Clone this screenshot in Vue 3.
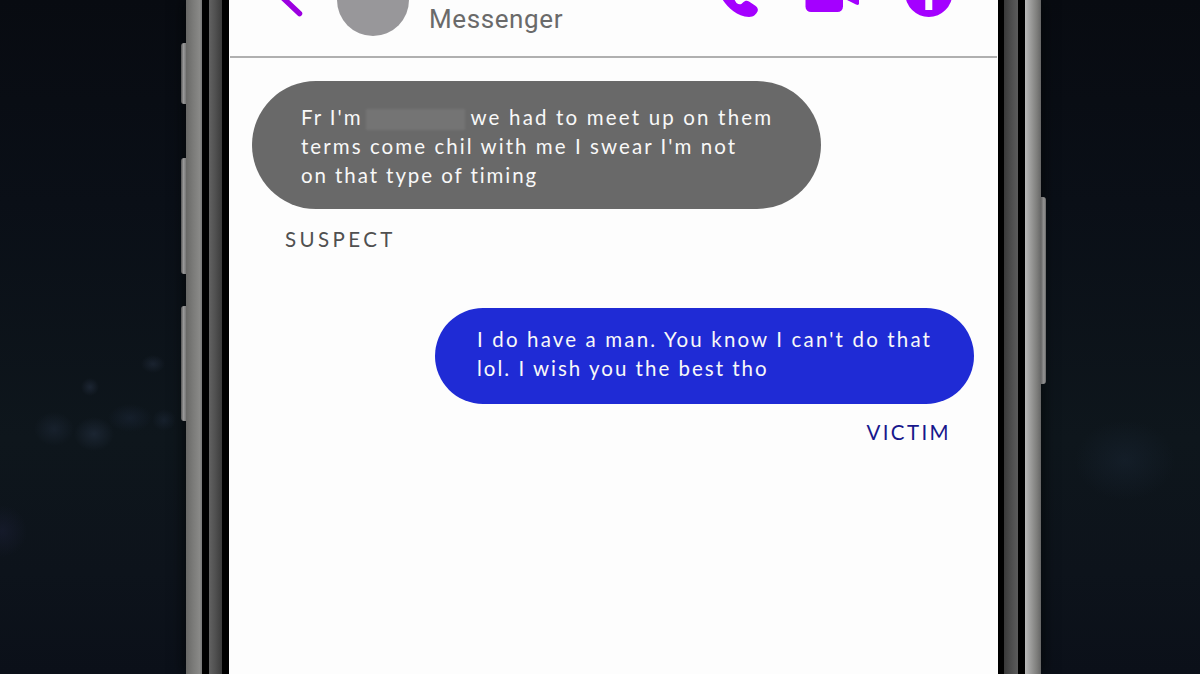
<template>
  <div class="scene">
    <div class="phone">
      <span class="key key-silent"></span>
      <span class="key key-up"></span>
      <span class="key key-down"></span>
      <span class="key key-power"></span>

      <div class="rail rail-left"></div>
      <div class="gap"></div>
      <div class="bezel bezel-left"></div>
      <div class="gap"></div>

      <div class="screen">
        <header class="header">
          <svg class="back" width="30" height="56" viewBox="0 0 30 56">
            <path d="M19 -20 L4 -3 L21.500 13.500" />
          </svg>
          <div class="avatar"></div>
          <span class="app-name">Messenger</span>
          <svg class="actions" width="240" height="56" viewBox="0 0 240 56">
            <path
              d="M-2 -12 C1 -2 12 16 30 17 C35 17 37 14 38.500 11.5 C39.5 9 38.500 7.5 36 5.5 L30 1.5 C28 0 26 .5 24 2.5 C22 4.8 20 5 17.500 3 L8 -12 Z"
            />
            <rect x="86.500" y="-15" width="37.500" height="27" rx="5.500" />
            <path d="M127 -3 L140 -11 V3.300 Q140 6 137 4.600 L127 -.5 Z" />
            <circle cx="209.800" cy="-6.500" r="23.500" />
            <rect class="info-stem" x="206.300" y="-8" width="7" height="18" />
          </svg>
        </header>

        <main class="chat">
          <section
            v-for="message in messages"
            :key="message.author"
            class="message"
            :class="message.side"
          >
            <div class="bubble">
              <p v-for="(line, i) in message.lines" :key="i" class="line">
                <span
                  v-for="(part, j) in line"
                  :key="j"
                  :class="part.hidden ? 'hidden-name' : ''"
                  :style="part.hidden ? null : { letterSpacing: part.spacing + 'px' }"
                  >{{ part.text }}</span
                >
              </p>
            </div>
            <span class="author">{{ message.author }}</span>
          </section>
        </main>
      </div>

      <div class="gap gap-thin"></div>
      <div class="bezel bezel-right"></div>
      <div class="gap"></div>
      <div class="rail rail-right"></div>
    </div>
  </div>
</template>

<script setup>
import { ref } from "vue";

const messages = ref([
  {
    author: "SUSPECT",
    side: "incoming",
    lines: [
      [
        { text: "Fr I'm", spacing: 1.95 },
        { hidden: true },
        { text: "we had to meet up on them", spacing: 2.17 },
      ],
      [{ text: "terms come chil with me I swear I'm not", spacing: 2.06 }],
      [{ text: "on that type of timing", spacing: 1.92 }],
    ],
  },
  {
    author: "VICTIM",
    side: "outgoing",
    lines: [
      [{ text: "I do have a man. You know I can't do that", spacing: 2.15 }],
      [{ text: "lol. I wish you the best tho", spacing: 2 }],
    ],
  },
]);
</script>

<style>
body {
  margin: 0;
  overflow: hidden;
}
</style>

<style scoped>
.scene {
  display: flex;
  height: 674px;
  padding-left: 186px;
  box-sizing: border-box;
  overflow: hidden;
  font-family: Lato, "Liberation Sans", sans-serif;
  background:
    radial-gradient(ellipse 9px 9px at 90px 387px, rgba(50, 62, 85, 0.4), transparent),
    radial-gradient(ellipse 12px 9px at 153px 364px, rgba(50, 62, 85, 0.35), transparent),
    radial-gradient(ellipse 20px 17px at 54px 429px, rgba(45, 58, 82, 0.3), transparent),
    radial-gradient(ellipse 20px 17px at 94px 434px, rgba(48, 62, 85, 0.38), transparent),
    radial-gradient(ellipse 22px 14px at 130px 418px, rgba(38, 52, 78, 0.3), transparent),
    radial-gradient(ellipse 12px 11px at 164px 420px, rgba(42, 56, 80, 0.3), transparent),
    radial-gradient(ellipse 25px 26px at 2px 531px, rgba(38, 40, 75, 0.3), transparent),
    radial-gradient(ellipse 50px 40px at 1125px 460px, rgba(30, 44, 62, 0.35), transparent),
    linear-gradient(180deg, #080b11, #0a0f17 30%, #0e161c 65%, #0d131b 85%, #0b1019);
}
.phone {
  position: relative;
  display: flex;
  width: 855px;
  height: 100%;
  background-color: #000;
  box-shadow: 0 0 14px #030606;
}
.rail {
  width: 16px;
}
.rail-left {
  background: linear-gradient(90deg, #686866, #7b7b79 45%, #898987 85%, #777);
}
.rail-right {
  background: linear-gradient(90deg, #b9b9b9, #a0a09f 30%, #7d7d7b 75%, #666);
}
.gap {
  width: 7px;
  background-color: #000;
}
.gap-thin {
  width: 6px;
}
.bezel-left {
  width: 13px;
  background: linear-gradient(90deg, #626262, #505050 50%, #3b3b3b);
}
.bezel-right {
  width: 14px;
  background: linear-gradient(90deg, #393939, #4b4b4b 50%, #5b5b5b);
}
.key {
  position: absolute;
  left: -5px;
  width: 5px;
  border-radius: 3px 0 0 3px;
  background: linear-gradient(90deg, #555, #999 50%, #777);
}
.key-silent {
  top: 43px;
  height: 61px;
}
.key-up {
  top: 158px;
  height: 116px;
}
.key-down {
  top: 306px;
  height: 115px;
}
.key-power {
  top: 197px;
  left: 855px;
  height: 187px;
  border-radius: 0 3px 3px 0;
  background: linear-gradient(90deg, #666, #959595 60%, #666);
}
.screen {
  width: 769px;
  background-color: #fdfdfd;
  overflow: hidden;
}
.header {
  display: flex;
  height: 56px;
  padding-left: 48px;
  margin: 0 1px;
  border-bottom: 2px solid #b0b0b0;
}
.back {
  fill: none;
  stroke: #9c00e0;
  stroke-width: 5.5;
  stroke-linecap: round;
}
.avatar {
  width: 72px;
  height: 72px;
  margin: -36px 0 0 29px;
  border-radius: 50%;
  background-color: #98979a;
}
.app-name {
  width: 134px;
  margin: 3px 0 0 20px;
  font-family: Roboto, sans-serif;
  font-size: 26px;
  line-height: 32px;
  letter-spacing: 0.6px;
  color: #6a6a6a;
}
.actions {
  margin-left: 156px;
  fill: #a400ff;
}
.info-stem {
  fill: #fdfdfd;
}
.chat {
  display: flex;
  flex-direction: column;
  padding: 23px 24px 0 23px;
}
.message {
  display: flex;
  flex-direction: column;
}
.incoming {
  align-items: flex-start;
  height: 227px;
}
.outgoing {
  align-items: flex-end;
}
.bubble {
  box-sizing: border-box;
  border-radius: 64px;
  color: #f8f8f8;
}
.incoming .bubble {
  width: 569px;
  height: 128px;
  padding: 22px 0 0 49px;
  background-color: #696969;
}
.outgoing .bubble {
  width: 539px;
  height: 96px;
  padding: 17px 0 0 42px;
  background-color: #1f2bd5;
}
.line {
  display: flex;
  align-items: center;
  height: 29px;
  margin: 0;
  font-size: 20.5px;
  line-height: 29px;
  white-space: nowrap;
}
.hidden-name {
  width: 99px;
  height: 21px;
  margin: 3px 5px 0 4px;
  background-color: #747474;
  filter: blur(1px);
}
.author {
  font-size: 20.5px;
  line-height: 28px;
  letter-spacing: 3.4px;
}
.incoming .author {
  margin: 16px 0 0 33px;
  color: #505050;
}
.outgoing .author {
  margin: 14px 23px 0 0;
  letter-spacing: 2.4px;
  color: #17178c;
}
</style>
